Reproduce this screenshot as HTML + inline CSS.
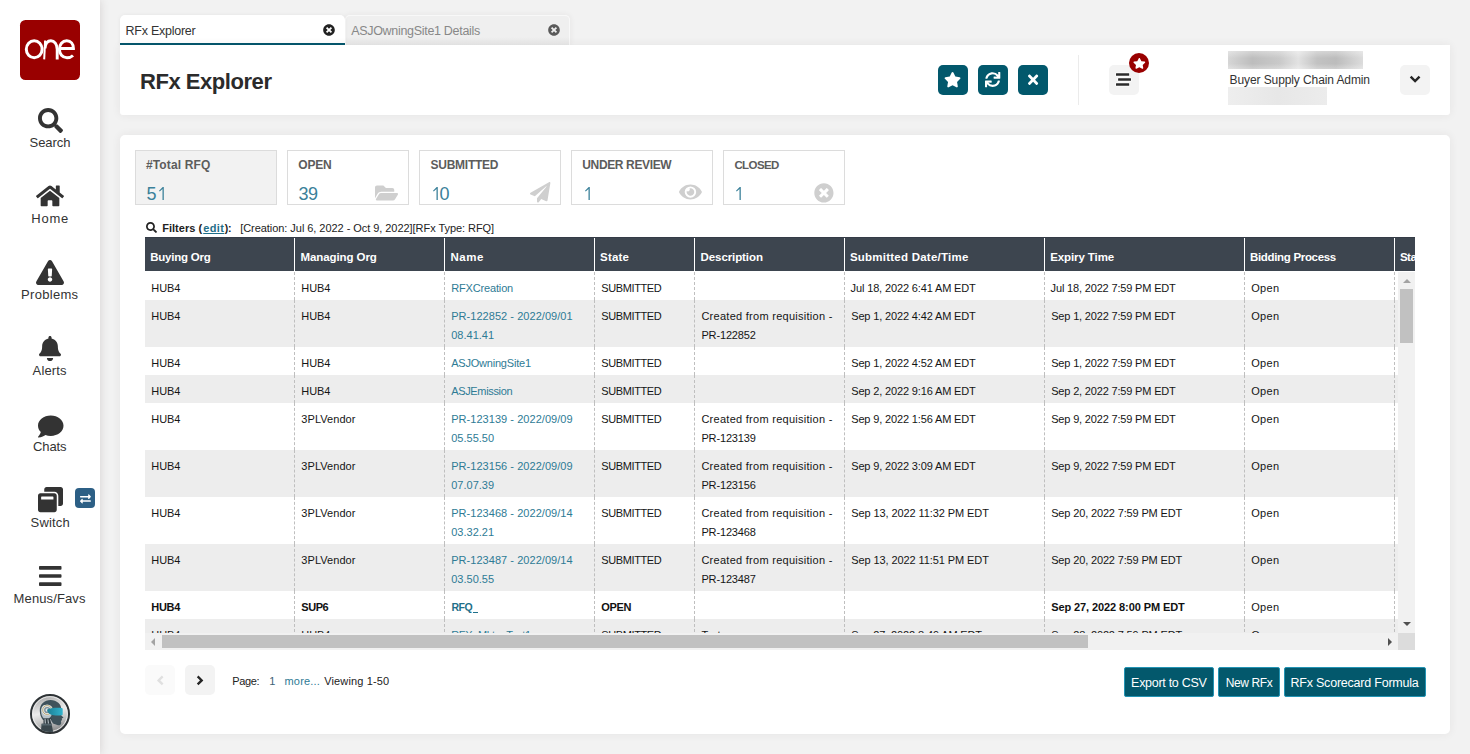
<!DOCTYPE html><html><head><meta charset="utf-8"><title>RFx Explorer</title><style>

html,body{margin:0;padding:0}
body{width:1470px;height:754px;overflow:hidden;background:#f2f2f2;font-family:"Liberation Sans",sans-serif;position:relative}
.t{position:absolute;white-space:nowrap}
.ic{position:absolute;display:block;overflow:visible}
#side{position:absolute;left:0;top:0;width:100px;height:754px;background:#fff;box-shadow:0 0 9px rgba(60,40,40,.16)}
#tab1{position:absolute;left:120px;top:15px;width:225px;height:28px;background:#fff;border-radius:5px 5px 0 0;border-bottom:2px solid #04576d;box-shadow:0 0 4px rgba(0,0,0,.06)}
#tab2{position:absolute;left:345px;top:15px;width:223px;height:29px;background:linear-gradient(180deg,#efefef 0%,#efefef 72%,#e8e8e8 100%);border-radius:5px 5px 0 0;border:1px solid #f8f8f8;border-bottom:none;box-shadow:0 0 6px rgba(60,40,40,.07)}
#hdr{position:absolute;left:120px;top:45px;width:1330px;height:70px;background:#fff;border-radius:0 0 3px 3px;box-shadow:0 0 10px rgba(60,40,40,.07)}
#main{position:absolute;left:120px;top:135px;width:1330px;height:599px;background:#fff;border-radius:5px;box-shadow:0 0 10px rgba(60,40,40,.07)}
.tbtn{position:absolute;top:65px;width:30px;height:30px;border-radius:5px;background:#02586c}
.gbtn{position:absolute;width:30px;height:30px;border-radius:5px;background:#f3f3f3}
.card{position:absolute;top:150px;height:53px;border:1px solid #dcdcdc;box-sizing:content-box;background:#fff}
.card.sel{background:#f2f2f2}
#th{position:absolute;left:145px;top:237px;width:1270px;height:33px;background:#3d454f;border-top:1px solid #353c47}
.hs{position:absolute;top:238px;width:1px;height:33px;background:#fff}
#tb{position:absolute;left:145px;top:272px;width:1253px;height:361px;overflow:hidden;background:#fff}
.r{position:absolute;left:0;width:1253px}
.r.g{background:#ededed}
.r i{position:absolute;top:0;height:100%;width:0;border-left:1px dashed #bfbfbf}
#clip{position:absolute;left:0;top:0;width:1415px;height:633px;overflow:hidden}
#vsb{position:absolute;left:1398px;top:272px;width:17px;height:361px;background:#f1f1f1}
#vth{position:absolute;left:1400px;top:289px;width:13px;height:54px;background:#c1c1c1}
#hsb{position:absolute;left:145px;top:633px;width:1253px;height:17px;background:#f1f1f1}
#hth{position:absolute;left:162px;top:635px;width:926px;height:13px;background:#c1c1c1}
#corner{position:absolute;left:1398px;top:633px;width:17px;height:17px;background:#dcdcdc}
.abtn{position:absolute;top:667px;height:28px;border:1px solid #2394b4;background:#03586c;box-sizing:content-box;border-radius:2px}

</style></head><body>
<div id="side"></div><svg class="ic" style="left:20px;top:20px;width:60px;height:60px" viewBox="0 0 60 60">
<rect x="0" y="0" width="60" height="60" rx="5.5" fill="#990000"/>
<g fill="none" stroke="#fff" stroke-width="3">
<ellipse cx="14.2" cy="29.3" rx="7.9" ry="8.5"/>
<path d="M24.200 39.400L25.100 20.500" stroke-width="2"/><path d="M25 28.500c.4-4.800 2.800-7.700 5.900-7.700 3.400 0 6.300 3.200 6.300 8.700v9.900" stroke-width="2.900"/>
<path d="M39.400 28.400h14c0-4.500-2.600-7.600-6.600-7.600-4.400 0-7.400 3.700-7.400 8.500s3 8.500 7.600 8.500c2.500 0 4.400-.8 6-2.300"/>
</g></svg><svg class="ic" style="left:38px;top:108px;width:25px;height:25px" viewBox="0 0 512 512" preserveAspectRatio="none" ><path fill="#333" d="M505 442.7L405.3 343c-4.500-4.500-10.600-7-17-7H372c27.600-35.300 44-79.700 44-128C416 93.100 322.900 0 208 0S0 93.100 0 208s93.100 208 208 208c48.300 0 92.700-16.400 128-44v16.300c0 6.400 2.500 12.500 7 17l99.700 99.700c9.400 9.400 24.600 9.400 33.900 0l28.300-28.300c9.400-9.400 9.400-24.600.1-34zM208 336c-70.700 0-128-57.200-128-128 0-70.700 57.200-128 128-128 70.700 0 128 57.200 128 128 0 70.700-57.200 128-128 128z"/></svg><svg class="ic" style="left:36px;top:184.4px;width:28px;height:23.8px" viewBox="0 0 576 512" preserveAspectRatio="none" ><path fill="#333" d="M280.370 148.260L96 300.110V464a16 16 0 0 0 16 16l112.060-.290a16 16 0 0 0 15.920-16V368a16 16 0 0 1 16-16h64a16 16 0 0 1 16 16v95.640a16 16 0 0 0 16 16.050L464 480a16 16 0 0 0 16-16V300L295.670 148.260a12.190 12.190 0 0 0-15.300 0zM571.600 251.470L488 182.560V44.050a12 12 0 0 0-12-12h-56a12 12 0 0 0-12 12v72.610L318.470 43a48 48 0 0 0-61 0L4.340 251.470a12 12 0 0 0-1.600 16.900l25.500 31A12 12 0 0 0 45.150 301l235.220-193.740a12.190 12.190 0 0 1 15.300 0L530.900 301a12 12 0 0 0 16.900-1.600l25.500-31a12 12 0 0 0-1.700-16.930z"/></svg><svg class="ic" style="left:36px;top:259.5px;width:28px;height:25px" viewBox="0 0 576 512" preserveAspectRatio="none" ><path fill="#333" d="M569.517 440.013C587.975 472.007 564.806 512 527.940 512H48.054c-36.937 0-59.999-40.055-41.577-71.987L246.423 23.985c18.467-32.009 64.720-31.951 83.154 0l239.940 416.028zM288 354c-25.405 0-46 20.595-46 46s20.595 46 46 46 46-20.595 46-46-20.595-46-46-46zm-43.673-165.346l7.418 136c.347 6.364 5.609 11.346 11.982 11.346h48.546c6.373 0 11.635-4.982 11.982-11.346l7.418-136c.375-6.874-5.098-12.654-11.982-12.654h-63.383c-6.884 0-12.356 5.780-11.981 12.654z"/></svg><svg class="ic" style="left:39px;top:335.5px;width:22px;height:25px" viewBox="0 0 448 512" preserveAspectRatio="none" ><path fill="#333" d="M224 512c35.320 0 63.970-28.650 63.970-64H160.030c0 35.350 28.650 64 63.970 64zm215.390-149.710c-19.320-20.760-55.470-51.990-55.470-154.290 0-77.700-54.480-139.900-127.940-155.160V32c0-17.670-14.320-32-31.980-32s-31.980 14.330-31.980 32v20.840C118.560 68.100 64.080 130.300 64.080 208c0 102.300-36.150 133.530-55.470 154.290-6 6.450-8.660 14.160-8.610 21.710.11 16.400 12.980 32 32.100 32h383.800c19.120 0 32-15.600 32.100-32 .05-7.550-2.610-15.270-8.610-21.710z"/></svg><svg class="ic" style="left:38px;top:414px;width:25.5px;height:25px" viewBox="0 0 512 512" preserveAspectRatio="none" ><path fill="#333" d="M256 32C114.600 32 0 125.100 0 240c0 49.600 21.400 95 57 130.700C44.500 421.100 2.700 466 2.200 466.500c-2.200 2.300-2.800 5.700-1.500 8.700S4.800 480 8 480c66.300 0 116-31.800 140.600-51.400 32.700 12.300 69 19.400 107.400 19.400 141.400 0 256-93.100 256-208S397.400 32 256 32z"/></svg><svg class="ic" style="left:38px;top:486.9px;width:25px;height:25.2px" viewBox="0 0 512 512" preserveAspectRatio="none" ><path fill="#333" d="M512 48v288c0 26.500-21.500 48-48 48h-48V176c0-44.100-35.900-80-80-80H128V48c0-26.500 21.500-48 48-48h288c26.500 0 48 21.500 48 48zM384 176v288c0 26.500-21.500 48-48 48H48c-26.500 0-48-21.500-48-48V176c0-26.500 21.500-48 48-48h288c26.500 0 48 21.500 48 48zm-68 28c0-6.600-5.400-12-12-12H76c-6.600 0-12 5.400-12 12v52h252v-52z"/></svg><svg class="ic" style="left:38.7px;top:562.5px;width:22.5px;height:26px" viewBox="0 0 448 512" preserveAspectRatio="none" ><path fill="#333" d="M16 132h416c8.837 0 16-7.163 16-16V76c0-8.837-7.163-16-16-16H16C7.163 60 0 67.163 0 76v40c0 8.837 7.163 16 16 16zm0 160h416c8.837 0 16-7.163 16-16v-40c0-8.837-7.163-16-16-16H16c-8.837 0-16 7.163-16 16v40c0 8.837 7.163 16 16 16zm0 160h416c8.837 0 16-7.163 16-16v-40c0-8.837-7.163-16-16-16H16c-8.837 0-16 7.163-16 16v40c0 8.837 7.163 16 16 16z"/></svg><div style="position:absolute;left:75px;top:488px;width:20px;height:20px;border-radius:4px;background:#2c5f85"></div><svg class="ic" style="left:80px;top:492.6px;width:10.9px;height:11.8px" viewBox="0 0 512 512" preserveAspectRatio="none" ><path fill="#fff" d="M0 168v-16c0-13.255 10.745-24 24-24h360V80c0-21.367 25.899-32.042 40.971-16.971l80 80c9.372 9.373 9.372 24.569 0 33.941l-80 80C409.956 271.982 384 261.456 384 240v-48H24c-13.255 0-24-10.745-24-24zm488 152H128v-48c0-21.314-25.862-32.080-40.971-16.971l-80 80c-9.372 9.373-9.372 24.569 0 33.941l80 80C102.057 463.997 128 453.437 128 432v-48h360c13.255 0 24-10.745 24-24v-16c0-13.255-10.745-24-24-24z"/></svg><svg class="ic" style="left:30px;top:694px;width:40px;height:40px" viewBox="0 0 40 40">
<defs><linearGradient id="ag" x1="0.1" y1="0" x2="0.35" y2="1"><stop offset="0" stop-color="#8e8f90"/><stop offset="0.22" stop-color="#c4c4c4"/><stop offset="0.5" stop-color="#ebebeb"/><stop offset="0.78" stop-color="#bdbdbd"/><stop offset="1" stop-color="#8a8b8c"/></linearGradient>
<linearGradient id="av" x1="0" y1="0" x2="1" y2="0"><stop offset="0" stop-color="#1d7f94"/><stop offset="0.5" stop-color="#2699b2"/><stop offset="1" stop-color="#33b3cc"/></linearGradient>
<clipPath id="ac"><circle cx="20" cy="20" r="18"/></clipPath></defs>
<circle cx="20" cy="20" r="19" fill="url(#ag)" stroke="#2d3235" stroke-width="2"/>
<circle cx="20" cy="20" r="17.300" fill="none" stroke="#f0f0f0" stroke-width="1" opacity=".85"/>
<g clip-path="url(#ac)">
<path d="M9.800 17C9.500 10.500 14.500 6.100 20.500 6.100c6.500 0 10.700 4.400 10.800 8.900v6.500l2.200 2.100-1.700.9.200 1.500-1 1 .2 2c-.2 2-1.700 2.500-3.200 2.200l-5-1.700-2-3.500h-8C11 23.500 9.900 20.500 9.800 17z" fill="#3f525b"/>
<path d="M11 17c.1 3 1 5.500 2.800 7.500h5c2.500-1.500 3.800-4.500 3.200-8-1-4-4.500-6.500-8.500-5.300C12 12 10.900 14.500 11 17z" fill="#b9c4ca"/>
<path d="M13.500 24.500h8v6h-8z" fill="#2f3b41"/>
<path d="M14.600 24.800l.9 0 .4 5h-1.100zM17.500 25.200l.8 0 .7 4.600h-1.100zM20.200 25l.6 0 1.200 4.300-.8.300z" fill="#c7d0d5"/>
<path d="M10.700 38l1-8.200h9.800l1.700 8.200z" fill="#39464c"/>
<path d="M11.700 29.800h9.800l.4 1.800h-10.400z" fill="#55656c"/>
<circle cx="17.200" cy="16" r="5.600" fill="#dfe5e8"/>
<circle cx="17.200" cy="16" r="4.500" fill="none" stroke="#b8a061" stroke-width=".8"/>
<circle cx="17.200" cy="16" r="3.100" fill="#7d9099"/>
<circle cx="17.200" cy="16" r="1.700" fill="#dfe6ea"/>
<path d="M17.200 15.500c2.500-1.300 8-2 14.500-1.600.9.100 1 .6 1 1.500v4.500c0 .8-.3 1.300-1 1.400-4.500.6-8.500.2-11-.8-1.500-.6-3-2-3.500-3.500z" fill="url(#av)"/>
</g></svg><div id="tab2"></div><div id="tab1"></div><svg class="ic" style="left:323px;top:24px;width:12px;height:12px" viewBox="0 0 512 512" preserveAspectRatio="none" ><path fill="#222" d="M256 8C119 8 8 119 8 256s111 248 248 248 248-111 248-248S393 8 256 8zm121.600 313.100c4.700 4.700 4.700 12.300 0 17L338 377.600c-4.700 4.700-12.300 4.700-17 0L256 312l-65.100 65.600c-4.700 4.700-12.300 4.700-17 0L134.400 338c-4.700-4.700-4.700-12.300 0-17l65.600-65-65.600-65.100c-4.700-4.700-4.700-12.300 0-17l39.600-39.600c4.700-4.700 12.300-4.700 17 0l65 65.700 65.100-65.600c4.700-4.700 12.300-4.700 17 0l39.600 39.600c4.700 4.700 4.700 12.300 0 17L312 256l65.600 65.100z"/></svg><svg class="ic" style="left:548.3px;top:24px;width:12px;height:12px" viewBox="0 0 512 512" preserveAspectRatio="none" ><path fill="#5a5a5a" d="M256 8C119 8 8 119 8 256s111 248 248 248 248-111 248-248S393 8 256 8zm121.600 313.100c4.700 4.700 4.700 12.300 0 17L338 377.600c-4.700 4.700-12.300 4.700-17 0L256 312l-65.100 65.600c-4.700 4.700-12.300 4.700-17 0L134.400 338c-4.700-4.700-4.700-12.300 0-17l65.600-65-65.600-65.100c-4.700-4.700-4.700-12.300 0-17l39.600-39.600c4.700-4.700 12.300-4.700 17 0l65 65.700 65.100-65.600c4.700-4.700 12.300-4.700 17 0l39.600 39.600c4.700 4.700 4.700 12.300 0 17L312 256l65.600 65.100z"/></svg><div id="hdr"></div><div class="tbtn" style="left:938px"></div><div class="tbtn" style="left:978px"></div><div class="tbtn" style="left:1018px"></div><svg class="ic" style="left:944px;top:71.7px;width:17.1px;height:15.4px" viewBox="0 0 576 512" preserveAspectRatio="none" ><path fill="#fff" d="M259.300 17.800L194 150.200 47.900 171.500c-26.200 3.800-36.700 36.100-17.700 54.600l105.700 103-25 145.500c-4.500 26.300 23.200 46 46.400 33.700L288 439.600l130.700 68.700c23.200 12.200 50.900-7.400 46.400-33.700l-25-145.500 105.700-103c19-18.500 8.500-50.800-17.700-54.600L382 150.200 316.700 17.800c-11.700-23.600-45.600-23.900-57.400 0z"/></svg><svg class="ic" style="left:984.9px;top:71.9px;width:15.3px;height:15.2px" viewBox="0 0 512 512" preserveAspectRatio="none" ><path fill="#fff" d="M440.650 12.570l4 82.770A247.160 247.160 0 0 0 255.830 8C134.730 8 33.910 94.920 12.290 209.820A12 12 0 0 0 24.090 224h49.050a12 12 0 0 0 11.670-9.260 175.910 175.910 0 0 1 317-56.940l-101.460-4.860a12 12 0 0 0-12.570 12v47.410a12 12 0 0 0 12 12H500a12 12 0 0 0 12-12V12a12 12 0 0 0-12-12h-47.370a12 12 0 0 0-11.980 12.570zM255.830 432a175.610 175.610 0 0 1-146-77.800l101.800 4.870a12 12 0 0 0 12.570-12v-47.400a12 12 0 0 0-12-12H12a12 12 0 0 0-12 12V500a12 12 0 0 0 12 12h47.350a12 12 0 0 0 12-12.600l-4.150-82.570A247.170 247.170 0 0 0 255.830 504c121.110 0 221.930-86.920 243.550-201.820a12 12 0 0 0-11.800-14.180h-49.050a12 12 0 0 0-11.670 9.260A175.860 175.860 0 0 1 255.830 432z"/></svg><svg class="ic" style="left:1028px;top:71.8px;width:10.2px;height:15.4px" viewBox="0 0 352 512" preserveAspectRatio="none" ><path fill="#fff" d="M242.720 256l100.070-100.070c12.280-12.280 12.280-32.190 0-44.480l-22.240-22.240c-12.280-12.280-32.190-12.280-44.480 0L176 189.280 75.930 89.210c-12.280-12.280-32.190-12.280-44.480 0L9.210 111.450c-12.280 12.280-12.280 32.190 0 44.480L109.280 256 9.210 356.070c-12.280 12.280-12.280 32.190 0 44.480l22.240 22.240c12.280 12.280 32.200 12.280 44.480 0L176 322.720l100.070 100.070c12.280 12.280 32.200 12.280 44.480 0l22.240-22.240c12.280-12.280 12.280-32.190 0-44.480L242.720 256z"/></svg><div style="position:absolute;left:1078px;top:55px;width:1px;height:50px;background:#ebebeb"></div><div class="gbtn" style="left:1109px;top:65px"></div><svg class="ic" style="left:1114px;top:71px;width:20px;height:17px" viewBox="0 0 20 17"><g fill="#2b2b2b" stroke="#fff" stroke-width="1.2" paint-order="stroke"><rect x="2" y="2.200" width="13.200" height="2.600" rx=".4"/><rect x="4.100" y="7.200" width="12.900" height="2.600" rx=".4"/><rect x="2" y="12.200" width="13.200" height="2.600" rx=".4"/></g></svg><div style="position:absolute;left:1129px;top:53px;width:20px;height:20px;border-radius:10px;background:#990000"></div><svg class="ic" style="left:1132.6px;top:57.9px;width:12.7px;height:10.8px" viewBox="0 0 576 512" preserveAspectRatio="none" ><path fill="#fff" d="M259.300 17.800L194 150.200 47.900 171.500c-26.200 3.800-36.700 36.100-17.700 54.600l105.700 103-25 145.500c-4.500 26.300 23.200 46 46.400 33.700L288 439.600l130.700 68.700c23.200 12.200 50.900-7.400 46.400-33.700l-25-145.500 105.700-103c19-18.500 8.500-50.800-17.700-54.600L382 150.200 316.700 17.800c-11.700-23.600-45.600-23.900-57.400 0z"/></svg><div style="position:absolute;left:1228px;top:51px;width:135px;height:18px;background:linear-gradient(90deg,#d6d6d6 0%,#bdbdbd 18%,#c9c9c9 38%,#e2e2e2 52%,#c2c2c2 66%,#bcbcbc 80%,#dcdcdc 100%);"></div><div style="position:absolute;left:1228px;top:51px;width:135px;height:18px;background:linear-gradient(180deg,rgba(255,255,255,.35) 0%,rgba(255,255,255,0) 40%,rgba(255,255,255,0) 70%,rgba(255,255,255,.3) 100%);"></div><div style="position:absolute;left:1228px;top:87px;width:99px;height:18px;background:linear-gradient(90deg,#eeeeee,#e7e7e7 50%,#ececec);"></div><div class="gbtn" style="left:1400px;top:65px"></div><div id="main"></div><div class="card sel" style="left:135px;width:140px"></div><div class="card" style="left:287px;width:120px"></div><div class="card" style="left:419px;width:140px"></div><div class="card" style="left:571px;width:140px"></div><div class="card" style="left:723px;width:120px"></div><svg class="ic" style="left:158.3px;top:187px;width:6px;height:13px" viewBox="0 0 6 13"><path fill="#3b819a" d="M1 3.700L4.700 0.100h1.100V13H4.500V1.900L1.700 4.600z"/></svg><svg class="ic" style="left:431.5px;top:187px;width:6px;height:13px" viewBox="0 0 6 13"><path fill="#3b819a" d="M1 3.700L4.700 0.100h1.100V13H4.500V1.900L1.700 4.600z"/></svg><svg class="ic" style="left:583.6px;top:187px;width:6px;height:13px" viewBox="0 0 6 13"><path fill="#3b819a" d="M1 3.700L4.700 0.100h1.100V13H4.500V1.900L1.700 4.600z"/></svg><svg class="ic" style="left:735.3px;top:187px;width:6px;height:13px" viewBox="0 0 6 13"><path fill="#3b819a" d="M1 3.700L4.700 0.100h1.100V13H4.500V1.900L1.700 4.600z"/></svg><svg class="ic" style="left:375.2px;top:182.5px;width:23.1px;height:20px" viewBox="0 0 576 512" preserveAspectRatio="none" ><path fill="#cfcfcf" d="M572.694 292.093L500.270 416.248A63.997 63.997 0 0 1 444.989 448H45.025c-18.523 0-30.064-20.093-20.731-36.093l72.424-124.155A64 64 0 0 1 152 256h399.964c18.523 0 30.064 20.093 20.730 36.093zM152 224h328v-48c0-26.510-21.490-48-48-48H272l-64-64H48C21.490 64 0 85.490 0 112v278.046l69.077-118.418C86.214 242.250 117.989 224 152 224z"/></svg><svg class="ic" style="left:529.8px;top:182.1px;width:20.4px;height:20.5px" viewBox="0 0 512 512" preserveAspectRatio="none" ><path fill="#cfcfcf" d="M476 3.200L12.500 270.600c-18.100 10.400-15.800 35.600 2.200 43.200L121 358.400l287.300-253.200c5.500-4.900 13.300 2.600 8.600 8.300L176 407v80.500c0 23.600 28.500 32.900 42.500 15.800L282 426l124.600 52.200c14.200 6 30.400-2.900 33-18.200l72-432C515 7.800 493.300-6.800 476 3.200z"/></svg><svg class="ic" style="left:679.2px;top:182.3px;width:22.9px;height:20px" viewBox="0 0 576 512" preserveAspectRatio="none" ><path fill="#cfcfcf" d="M572.520 241.400C518.290 135.590 410.930 64 288 64S57.680 135.640 3.480 241.410a32.350 32.350 0 0 0 0 29.190C57.710 376.410 165.070 448 288 448s230.320-71.640 284.520-177.410a32.350 32.350 0 0 0 0-29.190zM288 400a144 144 0 1 1 144-144 143.930 143.930 0 0 1-144 144zm0-240a95.310 95.310 0 0 0-25.310 3.790 47.850 47.850 0 0 1-66.900 66.900A95.780 95.780 0 1 0 288 160z"/></svg><svg class="ic" style="left:814.1px;top:182.7px;width:19.8px;height:19.8px" viewBox="0 0 512 512" preserveAspectRatio="none" ><path fill="#cfcfcf" d="M256 8C119 8 8 119 8 256s111 248 248 248 248-111 248-248S393 8 256 8zm121.600 313.100c4.700 4.700 4.700 12.300 0 17L338 377.600c-4.700 4.700-12.300 4.700-17 0L256 312l-65.100 65.600c-4.700 4.700-12.300 4.700-17 0L134.400 338c-4.700-4.700-4.700-12.300 0-17l65.600-65-65.600-65.100c-4.700-4.700-4.700-12.300 0-17l39.600-39.600c4.700-4.700 12.300-4.700 17 0l65 65.700 65.100-65.600c4.700-4.700 12.300-4.700 17 0l39.600 39.600c4.700 4.700 4.700 12.300 0 17L312 256l65.600 65.100z"/></svg><svg class="ic" style="left:146.4px;top:222.3px;width:11px;height:11px" viewBox="0 0 512 512" preserveAspectRatio="none" ><path fill="#222" d="M505 442.7L405.3 343c-4.500-4.500-10.600-7-17-7H372c27.600-35.300 44-79.700 44-128C416 93.100 322.900 0 208 0S0 93.100 0 208s93.100 208 208 208c48.300 0 92.700-16.400 128-44v16.300c0 6.400 2.500 12.500 7 17l99.700 99.700c9.400 9.400 24.600 9.400 33.900 0l28.300-28.300c9.400-9.400 9.400-24.600.1-34zM208 336c-70.700 0-128-57.200-128-128 0-70.700 57.200-128 128-128 70.700 0 128 57.200 128 128 0 70.700-57.200 128-128 128z"/></svg><div id="th"></div><div class="hs" style="left:294px"></div><div class="hs" style="left:444px"></div><div class="hs" style="left:594px"></div><div class="hs" style="left:694px"></div><div class="hs" style="left:844px"></div><div class="hs" style="left:1044px"></div><div class="hs" style="left:1244px"></div><div class="hs" style="left:1394px"></div><div id="tb"><div class="r" style="top:0px;height:28px"><i style="left:149px"></i><i style="left:299px"></i><i style="left:449px"></i><i style="left:549px"></i><i style="left:699px"></i><i style="left:899px"></i><i style="left:1099px"></i><i style="left:1249px"></i></div><div class="r g" style="top:28px;height:47px"><i style="left:149px"></i><i style="left:299px"></i><i style="left:449px"></i><i style="left:549px"></i><i style="left:699px"></i><i style="left:899px"></i><i style="left:1099px"></i><i style="left:1249px"></i></div><div class="r" style="top:75px;height:28px"><i style="left:149px"></i><i style="left:299px"></i><i style="left:449px"></i><i style="left:549px"></i><i style="left:699px"></i><i style="left:899px"></i><i style="left:1099px"></i><i style="left:1249px"></i></div><div class="r g" style="top:103px;height:28px"><i style="left:149px"></i><i style="left:299px"></i><i style="left:449px"></i><i style="left:549px"></i><i style="left:699px"></i><i style="left:899px"></i><i style="left:1099px"></i><i style="left:1249px"></i></div><div class="r" style="top:131px;height:47px"><i style="left:149px"></i><i style="left:299px"></i><i style="left:449px"></i><i style="left:549px"></i><i style="left:699px"></i><i style="left:899px"></i><i style="left:1099px"></i><i style="left:1249px"></i></div><div class="r g" style="top:178px;height:47px"><i style="left:149px"></i><i style="left:299px"></i><i style="left:449px"></i><i style="left:549px"></i><i style="left:699px"></i><i style="left:899px"></i><i style="left:1099px"></i><i style="left:1249px"></i></div><div class="r" style="top:225px;height:47px"><i style="left:149px"></i><i style="left:299px"></i><i style="left:449px"></i><i style="left:549px"></i><i style="left:699px"></i><i style="left:899px"></i><i style="left:1099px"></i><i style="left:1249px"></i></div><div class="r g" style="top:272px;height:47px"><i style="left:149px"></i><i style="left:299px"></i><i style="left:449px"></i><i style="left:549px"></i><i style="left:699px"></i><i style="left:899px"></i><i style="left:1099px"></i><i style="left:1249px"></i></div><div class="r" style="top:319px;height:28px"><i style="left:149px"></i><i style="left:299px"></i><i style="left:449px"></i><i style="left:549px"></i><i style="left:699px"></i><i style="left:899px"></i><i style="left:1099px"></i><i style="left:1249px"></i></div><div class="r g" style="top:347px;height:28px"><i style="left:149px"></i><i style="left:299px"></i><i style="left:449px"></i><i style="left:549px"></i><i style="left:699px"></i><i style="left:899px"></i><i style="left:1099px"></i><i style="left:1249px"></i></div></div><div style="position:absolute;left:473.1px;top:612.3px;width:4.6px;height:1.2px;background:#1f6f89"></div><div id="vsb"></div><div id="vth"></div><svg class="ic" style="left:1402.500px;top:279px;width:8px;height:4px" viewBox="0 0 8 4"><path d="M0 4L4 0l4 4z" fill="#a3a3a3"/></svg><svg class="ic" style="left:1402.500px;top:622px;width:8px;height:4px" viewBox="0 0 8 4"><path d="M0 0h8L4 4z" fill="#505050"/></svg><div id="hsb"></div><div id="hth"></div><div id="corner"></div><svg class="ic" style="left:151px;top:638px;width:4px;height:8px" viewBox="0 0 4 8"><path d="M4 0v8L0 4z" fill="#a3a3a3"/></svg><svg class="ic" style="left:1388px;top:638px;width:4px;height:8px" viewBox="0 0 4 8"><path d="M0 0l4 4-4 4z" fill="#505050"/></svg><div class="gbtn" style="left:145px;top:665px;background:#fafafa"></div><div class="gbtn" style="left:185px;top:665px"></div><svg class="ic" style="left:0;top:0;width:1470px;height:754px;pointer-events:none" viewBox="0 0 1470 754"><g fill="none" stroke-width="2.400" stroke-linejoin="miter"><path d="M162.650 676.350L158.600 680.400l4.050 4.050" stroke="#e0e0e0"/><path d="M197.650 676.350L201.700 680.400l-4.050 4.050" stroke="#fff" stroke-width="3.800" opacity=".8"/><path d="M197.650 676.350L201.700 680.400l-4.050 4.050" stroke="#262626"/><path d="M1410.650 76.650L1415.100 81.100l4.450-4.450" stroke="#262626"/></g></svg><div class="abtn" style="left:1124px;width:88.0px"></div><div class="abtn" style="left:1218px;width:60.0px"></div><div class="abtn" style="left:1284px;width:140.0px"></div>
<span class="t" id="t0" style="left:29.50px;top:135.00px;font-size:13px;line-height:15px;color:#333;letter-spacing:-0.032px;">Search</span><span class="t" id="t1" style="left:31.30px;top:211.00px;font-size:13px;line-height:15px;color:#333;letter-spacing:0.751px;">Home</span><span class="t" id="t2" style="left:21.00px;top:287.00px;font-size:13px;line-height:15px;color:#333;letter-spacing:0.313px;">Problems</span><span class="t" id="t3" style="left:32.60px;top:363.00px;font-size:13px;line-height:15px;color:#333;letter-spacing:0.154px;">Alerts</span><span class="t" id="t4" style="left:33.00px;top:439.00px;font-size:13px;line-height:15px;color:#333;letter-spacing:-0.090px;">Chats</span><span class="t" id="t5" style="left:30.60px;top:515.00px;font-size:13px;line-height:15px;color:#333;letter-spacing:0.148px;">Switch</span><span class="t" id="t6" style="left:13.60px;top:591.00px;font-size:13px;line-height:15px;color:#333;letter-spacing:0.122px;">Menus/Favs</span><span class="t" id="t7" style="left:125.50px;top:24.00px;font-size:12.5px;line-height:14px;color:#333;letter-spacing:-0.252px;">RFx Explorer</span><span class="t" id="t8" style="left:351.20px;top:24.00px;font-size:12.5px;line-height:14px;color:#888;letter-spacing:-0.306px;">ASJOwningSite1 Details</span><span class="t" id="t9" style="left:140.00px;top:69.00px;font-size:22px;line-height:25px;color:#2b2b2b;font-weight:700;letter-spacing:-0.452px;">RFx Explorer</span><span class="t" id="t10" style="left:1229.60px;top:73.00px;font-size:12px;line-height:14px;color:#333;letter-spacing:-0.101px;">Buyer Supply Chain Admin</span><span class="t" id="t11" style="left:145.90px;top:158.00px;font-size:12px;line-height:14px;color:#5c5c5c;font-weight:700;letter-spacing:0.158px;">#Total RFQ</span><span class="t" id="t12" style="left:298.30px;top:158.00px;font-size:12px;line-height:14px;color:#5c5c5c;font-weight:700;letter-spacing:-0.214px;">OPEN</span><span class="t" id="t13" style="left:430.50px;top:158.00px;font-size:12px;line-height:14px;color:#5c5c5c;font-weight:700;letter-spacing:-0.254px;">SUBMITTED</span><span class="t" id="t14" style="left:582.30px;top:158.00px;font-size:12px;line-height:14px;color:#5c5c5c;font-weight:700;letter-spacing:-0.365px;">UNDER REVIEW</span><span class="t" id="t15" style="left:734.40px;top:159.00px;font-size:11.5px;line-height:12px;color:#5c5c5c;font-weight:700;letter-spacing:-0.583px;">CLOSED</span><span class="t" id="t16" style="left:146.40px;top:184.00px;font-size:18px;line-height:20px;color:#3b819a;">5</span><span class="t" id="t17" style="left:298.50px;top:184.00px;font-size:18px;line-height:20px;color:#3b819a;letter-spacing:-0.411px;">39</span><span class="t" id="t18" style="left:439.50px;top:184.00px;font-size:18px;line-height:20px;color:#3b819a;">0</span><span class="t" id="t19" style="left:162.20px;top:222.00px;font-size:11px;line-height:12px;color:#222;font-weight:700;letter-spacing:0.029px;">Filters (</span><span class="t" id="t20" style="left:203.20px;top:222.00px;font-size:11px;line-height:12px;color:#1f6f89;font-weight:700;letter-spacing:0.402px;text-decoration:underline;">edit</span><span class="t" id="t21" style="left:224.70px;top:222.00px;font-size:10.5px;line-height:12px;color:#222;font-weight:700;letter-spacing:-0.260px;">):</span><span class="t" id="t22" style="left:240.20px;top:222.00px;font-size:11px;line-height:12px;color:#222;letter-spacing:-0.051px;">[Creation: Jul 6, 2022 - Oct 9, 2022][RFx Type: RFQ]</span><span class="t" id="t23" style="left:150.20px;top:251.00px;font-size:11.5px;line-height:12px;color:#fff;font-weight:700;letter-spacing:-0.232px;">Buying Org</span><span class="t" id="t24" style="left:300.40px;top:251.00px;font-size:11.5px;line-height:12px;color:#fff;font-weight:700;letter-spacing:-0.080px;">Managing Org</span><span class="t" id="t25" style="left:450.60px;top:251.00px;font-size:11.5px;line-height:12px;color:#fff;font-weight:700;letter-spacing:0.458px;">Name</span><span class="t" id="t26" style="left:600.00px;top:251.00px;font-size:11.5px;line-height:12px;color:#fff;font-weight:700;letter-spacing:0.219px;">State</span><span class="t" id="t27" style="left:700.60px;top:251.00px;font-size:11.5px;line-height:12px;color:#fff;font-weight:700;letter-spacing:-0.094px;">Description</span><span class="t" id="t28" style="left:849.90px;top:251.00px;font-size:11.5px;line-height:12px;color:#fff;font-weight:700;letter-spacing:0.235px;">Submitted Date/Time</span><span class="t" id="t29" style="left:1050.20px;top:251.00px;font-size:11.5px;line-height:12px;color:#fff;font-weight:700;letter-spacing:-0.099px;">Expiry Time</span><span class="t" id="t30" style="left:1250.00px;top:251.00px;font-size:11.5px;line-height:12px;color:#fff;font-weight:700;letter-spacing:-0.325px;">Bidding Process</span><span class="t" id="t31" style="left:151.30px;top:282.00px;font-size:11px;line-height:12px;color:#151515;letter-spacing:-0.075px;">HUB4</span><span class="t" id="t32" style="left:301.30px;top:282.00px;font-size:11px;line-height:12px;color:#151515;letter-spacing:-0.075px;">HUB4</span><span class="t" id="t33" style="left:451.20px;top:282.00px;font-size:11px;line-height:12px;color:#2e7b95;letter-spacing:-0.156px;">RFXCreation</span><span class="t" id="t34" style="left:601.20px;top:282.00px;font-size:11px;line-height:12px;color:#151515;letter-spacing:-0.377px;">SUBMITTED</span><span class="t" id="t35" style="left:850.60px;top:282.00px;font-size:11px;line-height:12px;color:#151515;letter-spacing:-0.139px;">Jul 18, 2022 6:41 AM EDT</span><span class="t" id="t36" style="left:1050.60px;top:282.00px;font-size:11px;line-height:12px;color:#151515;letter-spacing:-0.165px;">Jul 18, 2022 7:59 PM EDT</span><span class="t" id="t37" style="left:1251.20px;top:282.00px;font-size:11px;line-height:12px;color:#151515;letter-spacing:0.336px;">Open</span><span class="t" id="t38" style="left:151.30px;top:310.00px;font-size:11px;line-height:12px;color:#151515;letter-spacing:-0.075px;">HUB4</span><span class="t" id="t39" style="left:301.30px;top:310.00px;font-size:11px;line-height:12px;color:#151515;letter-spacing:-0.075px;">HUB4</span><span class="t" id="t40" style="left:451.20px;top:310.00px;font-size:11px;line-height:12px;color:#2e7b95;letter-spacing:0.045px;">PR-122852 - 2022/09/01</span><span class="t" id="t41" style="left:451.20px;top:329.00px;font-size:11px;line-height:12px;color:#2e7b95;letter-spacing:0.014px;">08.41.41</span><span class="t" id="t42" style="left:601.20px;top:310.00px;font-size:11px;line-height:12px;color:#151515;letter-spacing:-0.377px;">SUBMITTED</span><span class="t" id="t43" style="left:701.40px;top:310.00px;font-size:11px;line-height:12px;color:#151515;letter-spacing:0.274px;">Created from requisition -</span><span class="t" id="t44" style="left:701.40px;top:329.00px;font-size:11px;line-height:12px;color:#151515;letter-spacing:-0.142px;">PR-122852</span><span class="t" id="t45" style="left:851.20px;top:310.00px;font-size:11px;line-height:12px;color:#151515;letter-spacing:-0.145px;">Sep 1, 2022 4:42 AM EDT</span><span class="t" id="t46" style="left:1051.20px;top:310.00px;font-size:11px;line-height:12px;color:#151515;letter-spacing:-0.172px;">Sep 1, 2022 7:59 PM EDT</span><span class="t" id="t47" style="left:1251.20px;top:310.00px;font-size:11px;line-height:12px;color:#151515;letter-spacing:0.336px;">Open</span><span class="t" id="t48" style="left:151.30px;top:357.00px;font-size:11px;line-height:12px;color:#151515;letter-spacing:-0.075px;">HUB4</span><span class="t" id="t49" style="left:301.30px;top:357.00px;font-size:11px;line-height:12px;color:#151515;letter-spacing:-0.075px;">HUB4</span><span class="t" id="t50" style="left:451.20px;top:357.00px;font-size:11px;line-height:12px;color:#2e7b95;letter-spacing:-0.210px;">ASJOwningSite1</span><span class="t" id="t51" style="left:601.20px;top:357.00px;font-size:11px;line-height:12px;color:#151515;letter-spacing:-0.377px;">SUBMITTED</span><span class="t" id="t52" style="left:851.20px;top:357.00px;font-size:11px;line-height:12px;color:#151515;letter-spacing:-0.145px;">Sep 1, 2022 4:52 AM EDT</span><span class="t" id="t53" style="left:1051.20px;top:357.00px;font-size:11px;line-height:12px;color:#151515;letter-spacing:-0.172px;">Sep 1, 2022 7:59 PM EDT</span><span class="t" id="t54" style="left:1251.20px;top:357.00px;font-size:11px;line-height:12px;color:#151515;letter-spacing:0.336px;">Open</span><span class="t" id="t55" style="left:151.30px;top:385.00px;font-size:11px;line-height:12px;color:#151515;letter-spacing:-0.075px;">HUB4</span><span class="t" id="t56" style="left:301.30px;top:385.00px;font-size:11px;line-height:12px;color:#151515;letter-spacing:-0.075px;">HUB4</span><span class="t" id="t57" style="left:451.20px;top:385.00px;font-size:11px;line-height:12px;color:#2e7b95;letter-spacing:-0.338px;">ASJEmission</span><span class="t" id="t58" style="left:601.20px;top:385.00px;font-size:11px;line-height:12px;color:#151515;letter-spacing:-0.377px;">SUBMITTED</span><span class="t" id="t59" style="left:851.20px;top:385.00px;font-size:11px;line-height:12px;color:#151515;letter-spacing:-0.145px;">Sep 2, 2022 9:16 AM EDT</span><span class="t" id="t60" style="left:1051.20px;top:385.00px;font-size:11px;line-height:12px;color:#151515;letter-spacing:-0.172px;">Sep 2, 2022 7:59 PM EDT</span><span class="t" id="t61" style="left:1251.20px;top:385.00px;font-size:11px;line-height:12px;color:#151515;letter-spacing:0.336px;">Open</span><span class="t" id="t62" style="left:151.30px;top:413.00px;font-size:11px;line-height:12px;color:#151515;letter-spacing:-0.075px;">HUB4</span><span class="t" id="t63" style="left:301.30px;top:413.00px;font-size:11px;line-height:12px;color:#151515;letter-spacing:0.068px;">3PLVendor</span><span class="t" id="t64" style="left:451.20px;top:413.00px;font-size:11px;line-height:12px;color:#2e7b95;letter-spacing:0.045px;">PR-123139 - 2022/09/09</span><span class="t" id="t65" style="left:451.20px;top:432.00px;font-size:11px;line-height:12px;color:#2e7b95;letter-spacing:0.014px;">05.55.50</span><span class="t" id="t66" style="left:601.20px;top:413.00px;font-size:11px;line-height:12px;color:#151515;letter-spacing:-0.377px;">SUBMITTED</span><span class="t" id="t67" style="left:701.40px;top:413.00px;font-size:11px;line-height:12px;color:#151515;letter-spacing:0.274px;">Created from requisition -</span><span class="t" id="t68" style="left:701.40px;top:432.00px;font-size:11px;line-height:12px;color:#151515;letter-spacing:-0.142px;">PR-123139</span><span class="t" id="t69" style="left:851.20px;top:413.00px;font-size:11px;line-height:12px;color:#151515;letter-spacing:-0.145px;">Sep 9, 2022 1:56 AM EDT</span><span class="t" id="t70" style="left:1051.20px;top:413.00px;font-size:11px;line-height:12px;color:#151515;letter-spacing:-0.172px;">Sep 9, 2022 7:59 PM EDT</span><span class="t" id="t71" style="left:1251.20px;top:413.00px;font-size:11px;line-height:12px;color:#151515;letter-spacing:0.336px;">Open</span><span class="t" id="t72" style="left:151.30px;top:460.00px;font-size:11px;line-height:12px;color:#151515;letter-spacing:-0.075px;">HUB4</span><span class="t" id="t73" style="left:301.30px;top:460.00px;font-size:11px;line-height:12px;color:#151515;letter-spacing:0.068px;">3PLVendor</span><span class="t" id="t74" style="left:451.20px;top:460.00px;font-size:11px;line-height:12px;color:#2e7b95;letter-spacing:0.045px;">PR-123156 - 2022/09/09</span><span class="t" id="t75" style="left:451.20px;top:479.00px;font-size:11px;line-height:12px;color:#2e7b95;letter-spacing:0.014px;">07.07.39</span><span class="t" id="t76" style="left:601.20px;top:460.00px;font-size:11px;line-height:12px;color:#151515;letter-spacing:-0.377px;">SUBMITTED</span><span class="t" id="t77" style="left:701.40px;top:460.00px;font-size:11px;line-height:12px;color:#151515;letter-spacing:0.274px;">Created from requisition -</span><span class="t" id="t78" style="left:701.40px;top:479.00px;font-size:11px;line-height:12px;color:#151515;letter-spacing:-0.142px;">PR-123156</span><span class="t" id="t79" style="left:851.20px;top:460.00px;font-size:11px;line-height:12px;color:#151515;letter-spacing:-0.145px;">Sep 9, 2022 3:09 AM EDT</span><span class="t" id="t80" style="left:1051.20px;top:460.00px;font-size:11px;line-height:12px;color:#151515;letter-spacing:-0.172px;">Sep 9, 2022 7:59 PM EDT</span><span class="t" id="t81" style="left:1251.20px;top:460.00px;font-size:11px;line-height:12px;color:#151515;letter-spacing:0.336px;">Open</span><span class="t" id="t82" style="left:151.30px;top:507.00px;font-size:11px;line-height:12px;color:#151515;letter-spacing:-0.075px;">HUB4</span><span class="t" id="t83" style="left:301.30px;top:507.00px;font-size:11px;line-height:12px;color:#151515;letter-spacing:0.068px;">3PLVendor</span><span class="t" id="t84" style="left:451.20px;top:507.00px;font-size:11px;line-height:12px;color:#2e7b95;letter-spacing:0.045px;">PR-123468 - 2022/09/14</span><span class="t" id="t85" style="left:451.20px;top:526.00px;font-size:11px;line-height:12px;color:#2e7b95;letter-spacing:0.014px;">03.32.21</span><span class="t" id="t86" style="left:601.20px;top:507.00px;font-size:11px;line-height:12px;color:#151515;letter-spacing:-0.377px;">SUBMITTED</span><span class="t" id="t87" style="left:701.40px;top:507.00px;font-size:11px;line-height:12px;color:#151515;letter-spacing:0.274px;">Created from requisition -</span><span class="t" id="t88" style="left:701.40px;top:526.00px;font-size:11px;line-height:12px;color:#151515;letter-spacing:-0.142px;">PR-123468</span><span class="t" id="t89" style="left:851.20px;top:507.00px;font-size:11px;line-height:12px;color:#151515;letter-spacing:-0.088px;">Sep 13, 2022 11:32 PM EDT</span><span class="t" id="t90" style="left:1051.20px;top:507.00px;font-size:11px;line-height:12px;color:#151515;letter-spacing:-0.152px;">Sep 20, 2022 7:59 PM EDT</span><span class="t" id="t91" style="left:1251.20px;top:507.00px;font-size:11px;line-height:12px;color:#151515;letter-spacing:0.336px;">Open</span><span class="t" id="t92" style="left:151.30px;top:554.00px;font-size:11px;line-height:12px;color:#151515;letter-spacing:-0.075px;">HUB4</span><span class="t" id="t93" style="left:301.30px;top:554.00px;font-size:11px;line-height:12px;color:#151515;letter-spacing:0.068px;">3PLVendor</span><span class="t" id="t94" style="left:451.20px;top:554.00px;font-size:11px;line-height:12px;color:#2e7b95;letter-spacing:0.045px;">PR-123487 - 2022/09/14</span><span class="t" id="t95" style="left:451.20px;top:573.00px;font-size:11px;line-height:12px;color:#2e7b95;letter-spacing:0.014px;">03.50.55</span><span class="t" id="t96" style="left:601.20px;top:554.00px;font-size:11px;line-height:12px;color:#151515;letter-spacing:-0.377px;">SUBMITTED</span><span class="t" id="t97" style="left:701.40px;top:554.00px;font-size:11px;line-height:12px;color:#151515;letter-spacing:0.274px;">Created from requisition -</span><span class="t" id="t98" style="left:701.40px;top:573.00px;font-size:11px;line-height:12px;color:#151515;letter-spacing:-0.142px;">PR-123487</span><span class="t" id="t99" style="left:851.20px;top:554.00px;font-size:11px;line-height:12px;color:#151515;letter-spacing:-0.088px;">Sep 13, 2022 11:51 PM EDT</span><span class="t" id="t100" style="left:1051.20px;top:554.00px;font-size:11px;line-height:12px;color:#151515;letter-spacing:-0.152px;">Sep 20, 2022 7:59 PM EDT</span><span class="t" id="t101" style="left:1251.20px;top:554.00px;font-size:11px;line-height:12px;color:#151515;letter-spacing:0.336px;">Open</span><span class="t" id="t102" style="left:151.30px;top:601.00px;font-size:11px;line-height:12px;color:#111;font-weight:700;letter-spacing:-0.311px;">HUB4</span><span class="t" id="t103" style="left:301.30px;top:601.00px;font-size:11px;line-height:12px;color:#111;font-weight:700;letter-spacing:-0.473px;">SUP6</span><span class="t" id="t104" style="left:451.50px;top:601.00px;font-size:10.5px;line-height:12px;color:#1f6f89;font-weight:700;letter-spacing:-0.548px;">RFQ</span><span class="t" id="t105" style="left:601.20px;top:601.00px;font-size:11px;line-height:12px;color:#111;font-weight:700;letter-spacing:-0.277px;">OPEN</span><span class="t" id="t106" style="left:1051.20px;top:601.00px;font-size:11px;line-height:12px;color:#111;font-weight:700;letter-spacing:-0.096px;">Sep 27, 2022 8:00 PM EDT</span><span class="t" id="t107" style="left:1251.20px;top:601.00px;font-size:11px;line-height:12px;color:#151515;letter-spacing:0.336px;">Open</span><span class="t" id="t108" style="left:232.30px;top:675.00px;font-size:11px;line-height:12px;color:#222;letter-spacing:-0.372px;">Page:</span><span class="t" id="t109" style="left:269.30px;top:675.00px;font-size:11px;line-height:12px;color:#3d6274;">1</span><span class="t" id="t110" style="left:284.50px;top:675.00px;font-size:11px;line-height:12px;color:#2e7b95;letter-spacing:0.188px;">more...</span><span class="t" id="t111" style="left:324.20px;top:675.00px;font-size:11px;line-height:12px;color:#222;letter-spacing:0.138px;">Viewing 1-50</span><span class="t" id="t112" style="left:1131.10px;top:676.00px;font-size:12.5px;line-height:14px;color:#fff;letter-spacing:-0.288px;">Export to CSV</span><span class="t" id="t113" style="left:1225.80px;top:676.00px;font-size:12px;line-height:14px;color:#fff;letter-spacing:-0.389px;">New RFx</span><span class="t" id="t114" style="left:1290.50px;top:676.00px;font-size:12.5px;line-height:14px;color:#fff;letter-spacing:-0.221px;">RFx Scorecard Formula</span>
<div id="clip"><span class="t" id="c0" style="left:151.30px;top:629.00px;font-size:11px;line-height:12px;color:#151515;letter-spacing:-0.075px;">HUB4</span><span class="t" id="c1" style="left:301.30px;top:629.00px;font-size:11px;line-height:12px;color:#151515;letter-spacing:-0.075px;">HUB4</span><span class="t" id="c2" style="left:451.20px;top:629.00px;font-size:11px;line-height:12px;color:#2e7b95;letter-spacing:-0.342px;">RFX_Mktp_Test1</span><span class="t" id="c3" style="left:601.20px;top:629.00px;font-size:11px;line-height:12px;color:#151515;letter-spacing:-0.377px;">SUBMITTED</span><span class="t" id="c4" style="left:701.40px;top:629.00px;font-size:11px;line-height:12px;color:#151515;letter-spacing:-0.339px;">Test</span><span class="t" id="c5" style="left:851.20px;top:629.00px;font-size:11px;line-height:12px;color:#151515;letter-spacing:-0.131px;">Sep 27, 2022 8:49 AM EDT</span><span class="t" id="c6" style="left:1051.20px;top:629.00px;font-size:11px;line-height:12px;color:#151515;letter-spacing:-0.152px;">Sep 28, 2022 7:59 PM EDT</span><span class="t" id="c7" style="left:1251.20px;top:629.00px;font-size:11px;line-height:12px;color:#151515;letter-spacing:0.336px;">Open</span><span class="t" id="c8" style="left:1400.00px;top:251.00px;font-size:11.5px;line-height:12px;color:#fff;font-weight:700;letter-spacing:-0.550px;">Status</span></div>
</body></html>
